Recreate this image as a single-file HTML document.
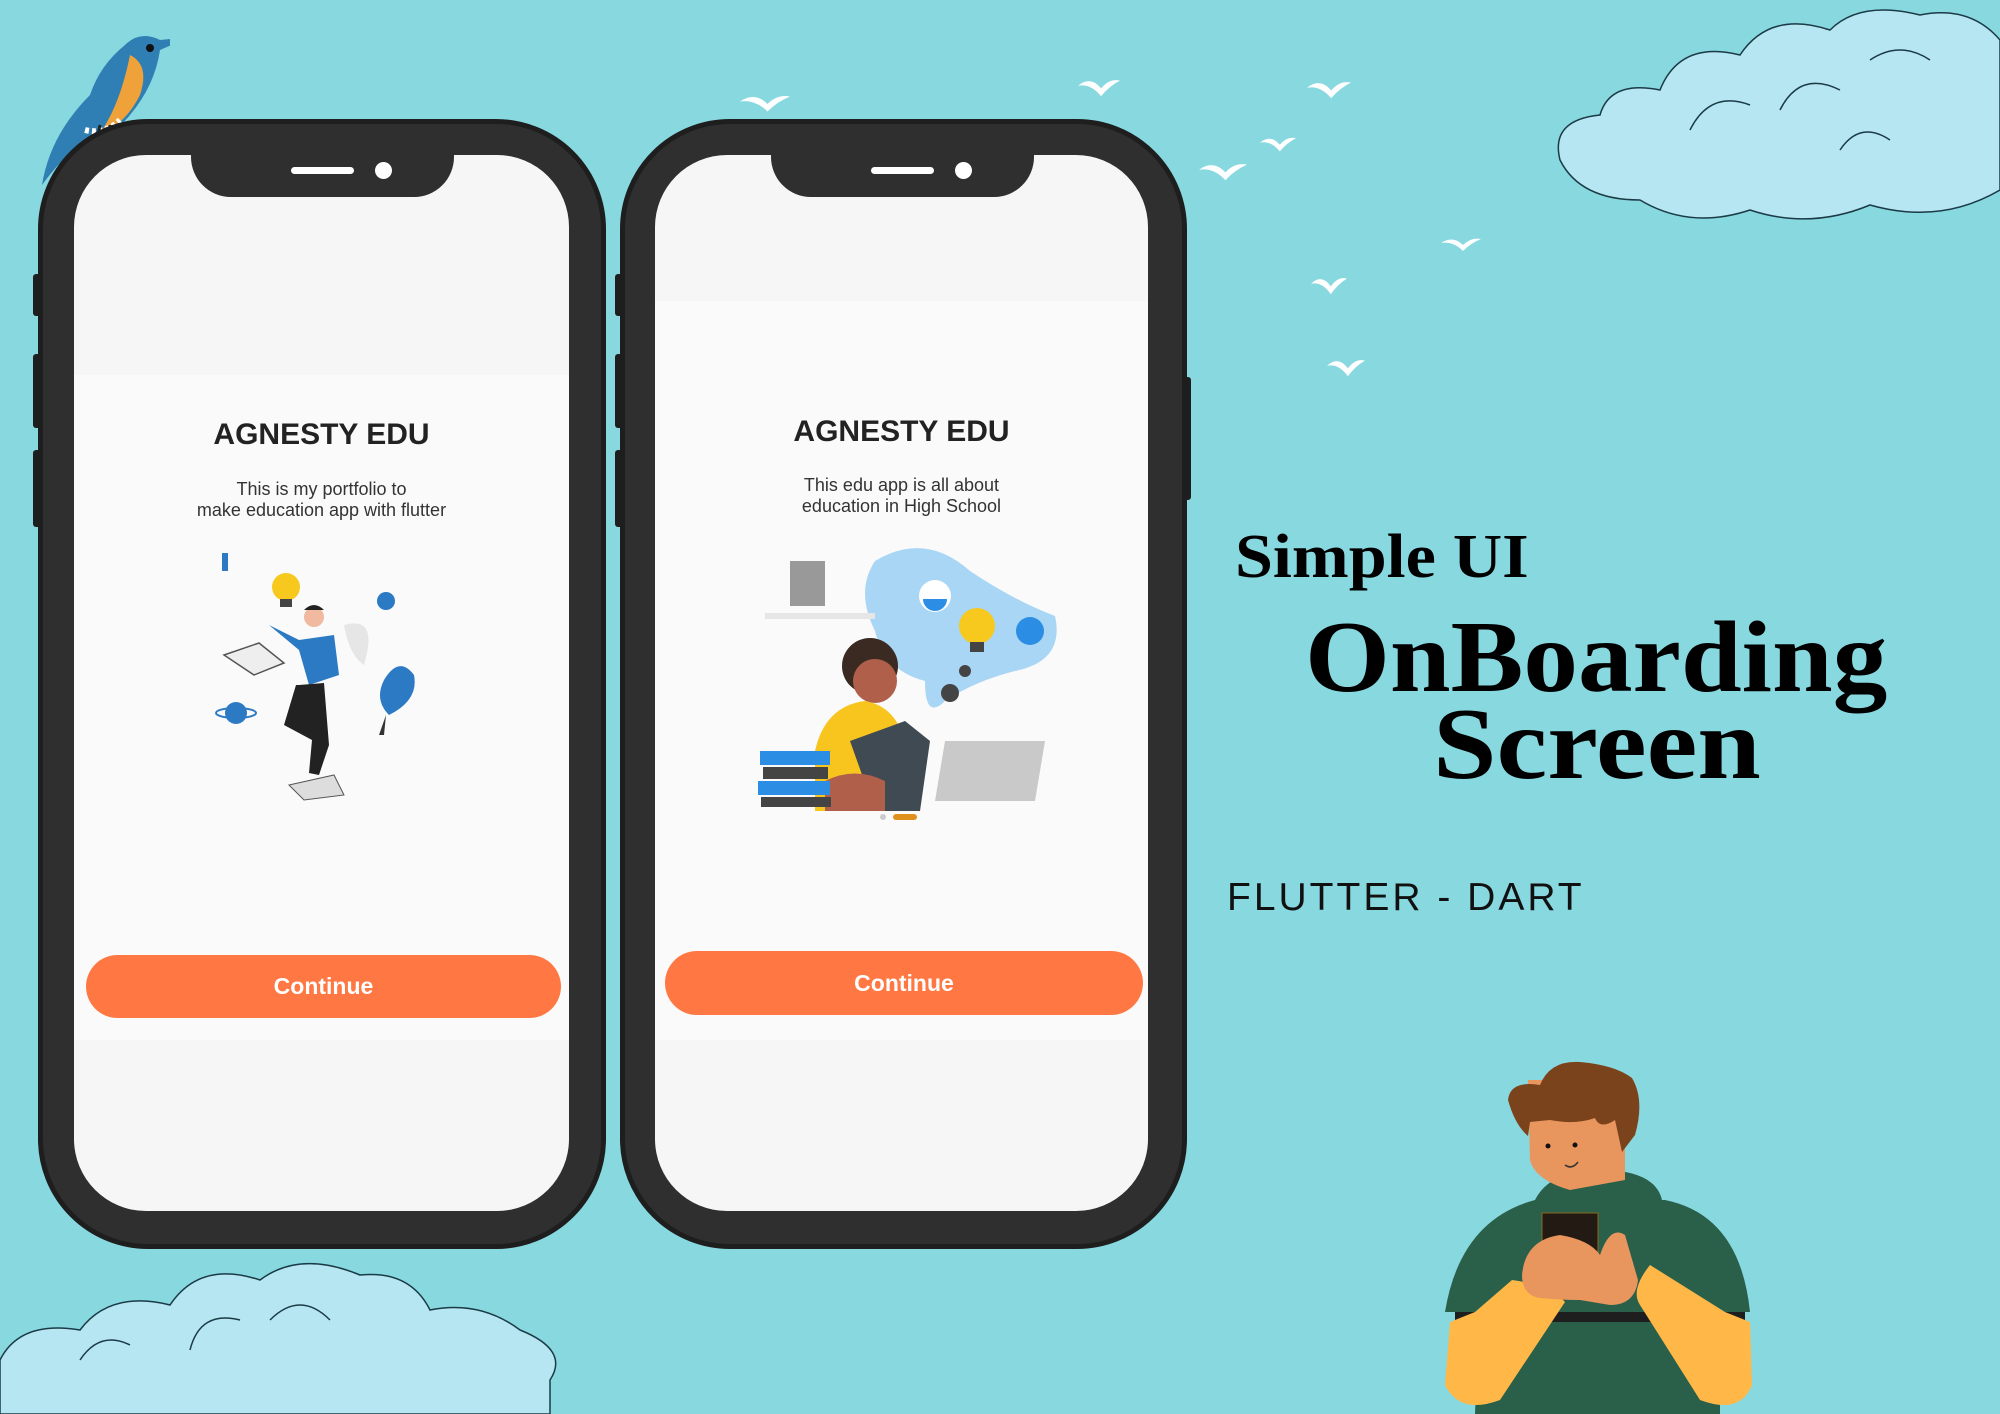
<!DOCTYPE html>
<html><head><meta charset="utf-8"><style>
html,body{margin:0;padding:0}
body{width:2000px;height:1414px;position:relative;overflow:hidden;background:#88d8e0;font-family:"Liberation Sans",sans-serif}
.abs{position:absolute}
.phone{position:absolute;background:#2f2f2f;border-radius:110px;border:5px solid #1e1e1e;box-sizing:border-box}
.screen{position:absolute;background:#f6f6f6;border-radius:72px;overflow:hidden}
.content{position:absolute;left:0;right:0;background:#fafafa}
.title{position:absolute;left:0;right:0;text-align:center;font-weight:bold;font-size:30px;color:#222}
.sub{position:absolute;left:0;right:0;text-align:center;font-size:18px;line-height:21px;color:#333}
.btn{position:absolute;background:#ff7843;border-radius:32px;color:#fff;text-align:center;font-size:23px;font-weight:bold}
.side{position:absolute;background:#1e1e1e;border-radius:3px}
.serif{font-family:"Liberation Serif",serif;font-weight:bold;color:#000;white-space:nowrap;transform-origin:0 0}
</style></head><body>

<!-- clouds top right -->
<svg class="abs" style="left:1540px;top:0" width="460" height="230" viewBox="0 0 460 230">
<path d="M20 160 Q10 120 60 115 Q70 80 120 90 Q140 40 200 55 Q230 10 290 30 Q320 0 380 15 Q430 5 460 40 L460 190 Q400 225 330 205 Q270 230 210 210 Q150 230 100 200 Q40 200 20 160Z" fill="#b6e6f1" stroke="#1a3a46" stroke-width="1.5"/>
<g fill="none" stroke="#1a3a46" stroke-width="1.5"><path d="M150 130 Q170 90 210 105"/><path d="M240 110 Q260 70 300 90"/><path d="M330 60 Q360 40 390 60"/><path d="M300 150 Q320 120 350 140"/></g>
</svg>
<!-- clouds bottom left -->
<svg class="abs" style="left:0;top:1250px" width="570" height="164" viewBox="0 0 570 164">
<path d="M0 110 Q20 70 80 80 Q110 40 170 55 Q200 10 260 30 Q300 0 360 25 Q410 20 430 60 Q480 50 520 80 Q570 100 550 130 L550 164 L0 164Z" fill="#b6e6f1" stroke="#1a3a46" stroke-width="1.5"/>
<g fill="none" stroke="#1a3a46" stroke-width="1.5"><path d="M190 100 Q200 60 240 70"/><path d="M270 70 Q300 40 330 70"/><path d="M80 110 Q100 80 130 95"/></g>
</svg>

<!-- bird -->
<svg class="abs" style="left:30px;top:15px" width="140" height="175" viewBox="0 0 140 175">
<path d="M12 170 Q20 120 60 80 Q70 50 95 30 Q110 15 130 25 L160 22 L130 35 Q125 70 100 100 Q80 125 50 130 Q30 145 12 170Z" fill="#2f7fb4"/>
<path d="M100 40 Q120 50 110 80 Q95 110 70 118 Q90 90 100 40Z" fill="#f0a23a"/>
<path d="M55 115 Q75 120 90 105" stroke="#fff" stroke-width="6" fill="none" stroke-dasharray="4 3"/>
<circle cx="120" cy="33" r="4" fill="#111"/>
<path d="M70 110 L65 135 M80 110 L80 135" stroke="#222" stroke-width="3"/>
</svg>

<!-- seagulls -->
<svg class="abs" style="left:0;top:0" width="1500" height="400" viewBox="0 0 1500 400">
<defs><path id="g" d="M0 6 Q12 -2 22 8 Q30 0 40 2 Q30 6 22 14 Q12 4 0 6Z" fill="#fff"/></defs>
<use href="#g" transform="translate(740,94) scale(1.25)"/>
<use href="#g" transform="translate(1078,78) scale(1.05,1.3)"/>
<use href="#g" transform="translate(1307,80) scale(1.1,1.3)"/>
<use href="#g" transform="translate(1260,136) scale(0.9,1.1)"/>
<use href="#g" transform="translate(1199,162) scale(1.2,1.3)"/>
<use href="#g" transform="translate(1441,237) scale(1,1)"/>
<use href="#g" transform="translate(1311,276) scale(0.9,1.3)"/>
<use href="#g" transform="translate(1327,358) scale(0.95,1.3)"/>
</svg>

<!-- PHONE 1 -->
<div class="side" style="left:33px;top:274px;width:8px;height:42px"></div>
<div class="side" style="left:33px;top:354px;width:8px;height:74px"></div>
<div class="side" style="left:33px;top:450px;width:8px;height:77px"></div>
<div class="phone" style="left:38px;top:119px;width:568px;height:1130px"></div>
<div class="screen" style="left:74px;top:155px;width:495px;height:1056px">
  <div class="content" style="top:220px;height:665px">
    <div class="title" style="top:43px">AGNESTY EDU</div>
    <div class="sub" style="top:104px">This is my portfolio to<br>make education app with flutter</div>
    <svg class="abs" style="left:90px;top:160px" width="320" height="300" viewBox="0 0 320 300">
      <rect x="58" y="18" width="6" height="18" fill="#2c7ac4"/>
      <circle cx="122" cy="52" r="14" fill="#f7c81e"/><rect x="116" y="64" width="12" height="8" fill="#444"/>
      <circle cx="222" cy="66" r="9" fill="#2c7ac4"/>
      <path d="M60 120 L95 108 L120 128 L90 140Z" fill="#eee" stroke="#555" stroke-width="1.5"/>
      <path d="M180 90 Q215 80 200 130 Q185 120 180 90Z" fill="#e6e6e6"/>
      <circle cx="150" cy="82" r="10" fill="#f0b9a0"/><path d="M140 75 Q150 65 160 75Z" fill="#222"/>
      <path d="M105 90 L135 105 L170 100 L175 140 L145 150 L135 115Z" fill="#2c7ac4"/>
      <path d="M135 150 L160 148 L165 210 L155 240 L145 238 L148 205 L120 190 L132 150Z" fill="#222"/>
      <path d="M125 250 L170 240 L180 260 L140 265Z" fill="#ddd" stroke="#555"/>
      <path d="M220 145 Q235 120 250 140 Q255 165 225 180 Q210 165 220 145Z" fill="#2c7ac4"/>
      <path d="M222 180 L215 200 L220 200Z" fill="#333"/>
      <circle cx="72" cy="178" r="11" fill="#2c7ac4"/><ellipse cx="72" cy="178" rx="20" ry="5" fill="none" stroke="#2c7ac4" stroke-width="2"/>
    </svg>
    <div class="abs" style="left:227px;top:622px;width:24px;height:6px;border-radius:3px;background:#e0901e"></div>
    <div class="abs" style="left:258px;top:622px;width:6px;height:6px;border-radius:3px;background:#ccc"></div>
  </div>
  <div class="btn" style="left:12px;top:800px;width:475px;height:63px;line-height:63px">Continue</div>
  <div class="abs" style="left:117px;top:0;width:263px;height:42px;background:#2f2f2f;border-radius:0 0 40px 40px"></div>
  <div class="abs" style="left:217px;top:12px;width:63px;height:7px;border-radius:4px;background:#fff"></div>
  <div class="abs" style="left:301px;top:7px;width:17px;height:17px;border-radius:50%;background:#fff"></div>
</div>

<!-- PHONE 2 -->
<div class="side" style="left:615px;top:274px;width:8px;height:42px"></div>
<div class="side" style="left:615px;top:354px;width:8px;height:74px"></div>
<div class="side" style="left:615px;top:450px;width:8px;height:77px"></div>
<div class="side" style="left:1183px;top:377px;width:8px;height:123px"></div>
<div class="phone" style="left:620px;top:119px;width:567px;height:1130px"></div>
<div class="screen" style="left:655px;top:155px;width:493px;height:1056px">
  <div class="content" style="top:146px;height:739px">
    <div class="title" style="top:114px">AGNESTY EDU</div>
    <div class="sub" style="top:174px">This edu app is all about<br>education in High School</div>
    <svg class="abs" style="left:100px;top:240px" width="310" height="280" viewBox="0 0 310 280">
      <path d="M120 20 Q170 -10 215 30 Q260 60 300 75 Q310 120 260 130 Q220 140 190 160 Q170 180 170 140 Q130 130 120 90 Q100 50 120 20Z" fill="#a9d6f5"/>
      <circle cx="180" cy="55" r="16" fill="#fff"/><path d="M168 58 h24 a12 12 0 0 1 -24 0Z" fill="#2c8de4"/>
      <circle cx="275" cy="90" r="14" fill="#2c8de4"/>
      <circle cx="222" cy="85" r="18" fill="#f7c81e"/><rect x="215" y="101" width="14" height="10" fill="#444"/>
      <circle cx="195" cy="152" r="9" fill="#444"/><circle cx="210" cy="130" r="6" fill="#444"/>
      <rect x="35" y="20" width="35" height="45" fill="#999"/><rect x="10" y="72" width="110" height="6" fill="#e6e6e6"/>
      <circle cx="115" cy="125" r="28" fill="#3a2a22"/><circle cx="120" cy="140" r="22" fill="#b05f4b"/>
      <path d="M60 210 Q70 165 110 160 Q140 165 150 200 L150 270 L60 270Z" fill="#f8c41e"/>
      <path d="M95 200 L150 180 L175 200 L165 270 L120 270Z" fill="#3f4a52"/>
      <path d="M70 240 Q100 225 130 240 L130 270 L70 270Z" fill="#b05f4b"/>
      <path d="M190 200 L290 200 L280 260 L180 260Z" fill="#c9c9c9"/>
      <rect x="5" y="210" width="70" height="14" fill="#2c8de4"/><rect x="8" y="226" width="65" height="12" fill="#444"/>
      <rect x="3" y="240" width="72" height="14" fill="#2c8de4"/><rect x="6" y="256" width="70" height="10" fill="#444"/>
    </svg>
    <div class="abs" style="left:225px;top:513px;width:6px;height:6px;border-radius:3px;background:#ccc"></div>
    <div class="abs" style="left:238px;top:513px;width:24px;height:6px;border-radius:3px;background:#e0901e"></div>
  </div>
  <div class="btn" style="left:10px;top:796px;width:478px;height:64px;line-height:64px">Continue</div>
  <div class="abs" style="left:116px;top:0;width:263px;height:42px;background:#2f2f2f;border-radius:0 0 40px 40px"></div>
  <div class="abs" style="left:216px;top:12px;width:63px;height:7px;border-radius:4px;background:#fff"></div>
  <div class="abs" style="left:300px;top:7px;width:17px;height:17px;border-radius:50%;background:#fff"></div>
</div>

<!-- Right text -->
<div class="abs serif" style="left:1235px;top:522px;font-size:62px;line-height:70px;transform:scaleX(1.1)">Simple UI</div>
<div class="abs serif" style="left:1305px;top:603px;font-size:102px;line-height:110px;transform:scaleX(1.07)">OnBoarding</div>
<div class="abs serif" style="left:1433px;top:690px;font-size:102px;line-height:110px;transform:scaleX(1.12)">Screen</div>
<div class="abs" style="left:1227px;top:876px;font-size:39px;line-height:44px;color:#111;white-space:nowrap;letter-spacing:3px">FLUTTER - DART</div>

<!-- man -->
<svg class="abs" style="left:1400px;top:1040px" width="400" height="374" viewBox="0 0 400 374">
<path d="M45 272 Q60 180 135 160 L265 160 Q340 175 350 272Z" fill="#2a5f4a"/>
<path d="M75 374 L80 250 Q140 140 200 160 Q270 150 320 250 L320 374Z" fill="#2a5f4a"/>
<path d="M135 160 Q150 130 200 130 Q255 130 262 160 Q240 180 200 185 Q160 180 135 160Z" fill="#2a5f4a"/>
<path d="M55 272 L345 272 L345 282 L55 282Z" fill="#1e1e1e"/>
<path d="M50 282 L75 272 L112 240 Q150 245 165 262 L100 360 Q60 375 45 345Z" fill="#ffb847"/>
<path d="M350 282 L325 272 L250 225 Q230 250 240 265 L300 360 Q340 375 352 345Z" fill="#ffb847"/>
<path d="M128 40 L225 40 L225 140 L170 150 Q135 140 130 120Z" fill="#e8965e"/>
<path d="M108 60 Q110 40 140 45 Q150 20 180 22 Q215 25 232 38 Q245 60 235 95 L222 112 L215 80 Q200 90 195 78 Q175 85 150 80 L130 82 L128 96 Q115 85 108 60Z" fill="#7b431c"/>
<circle cx="148" cy="106" r="2.5" fill="#111"/><circle cx="175" cy="105" r="2.5" fill="#111"/>
<path d="M165 125 Q172 130 178 122" stroke="#333" stroke-width="1.5" fill="none"/>
<rect x="142" y="173" width="56" height="40" fill="#231a14" stroke="#8a6a20"/>
<path d="M122 235 Q125 200 160 195 Q190 200 200 215 Q210 185 225 195 L238 240 Q235 265 210 265 L180 260 Q160 260 140 258 Q122 255 122 235Z" fill="#e8965e"/>
</svg>

</body></html>
